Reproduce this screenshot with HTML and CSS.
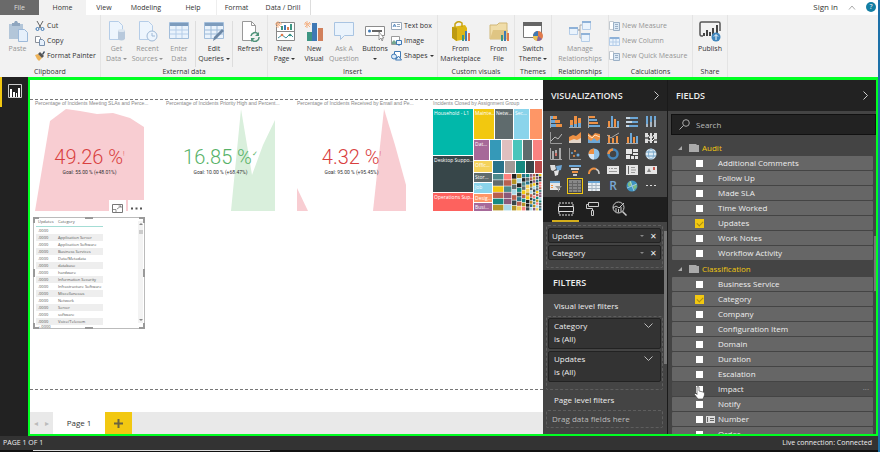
FILE: index.html
```html
<!DOCTYPE html>
<html lang="en">
<head>
    <meta charset="UTF-8">
    <meta name="viewport" content="width=device-width, initial-scale=1.0">
    <title>Report</title>
    <link rel="stylesheet" href="styles.css">
</head>
<body>
    <nav class="tabs">
        <button class="tab tab-file">File</button>
        <button class="tab tab-home">Home</button>
        <button class="tab tab-view">View</button>
        <button class="tab tab-modeling">Modeling</button>
        <button class="tab tab-help">Help</button>
        <button class="tab tab-format">Format</button>
        <button class="tab tab-drill">Data / Drill</button>
        <a class="sign-in" href="#">Sign in</a>
        <button class="collapse" aria-label="Collapse ribbon"><svg width="8" height="5" viewBox="0 0 8 5"><path d="M1 4.500L4 1l3 3.500" fill="none" stroke="#aaa"/></svg></button>
        <button class="help" aria-label="Help">?</button>
    </nav>

    <header class="ribbon">
        <section class="group clipboard">
            <div class="tools">
                <button class="big off">
                    <svg width="20" height="21" viewBox="0 0 20 21"><path d="M1 3h14v15H1z" fill="#b3c6d9"/><path d="M4 5V2h2l1-2h2l1 2h2v3z" fill="#8fa6bf"/><path d="M10.500 8.500h6l3 3v9h-9z" fill="#e6f0fb" stroke="#9db9d9"/></svg>
                    <span>Paste</span>
                </button>
                <div class="list">
                    <button><svg width="10" height="10" viewBox="0 0 10 10"><path d="M2 0l4 7M8 0L4 7" stroke="#666" fill="none"/><circle cx="2.500" cy="8" r="1.500" fill="none" stroke="#3f79b5"/><circle cx="7.500" cy="8" r="1.500" fill="none" stroke="#3f79b5"/></svg>Cut</button>
                    <button><svg width="10" height="10" viewBox="0 0 10 10"><path d="M.5.500h4l1 1v5h-5z" fill="#fff" stroke="#8a9099"/><path d="M4.500 3.500h3l2 2v4h-5z" fill="#e6f0fb" stroke="#7890ad"/></svg>Copy</button>
                    <button><svg width="10" height="10" viewBox="0 0 10 10"><path d="M0 4l3-1 4 4-3 3-2-2z" fill="#edb35a"/><path d="M3 3l2-2 4 4-2 2z" fill="#555"/><path d="M7 3l2-3 1 1-2 3z" fill="#3b4a5c"/></svg>Format Painter</button>
                </div>
            </div>
            <h2>Clipboard</h2>
        </section>

        <section class="group external">
            <div class="tools">
                <button class="big off">
                    <svg width="20" height="21" viewBox="0 0 20 21"><path d="M2.500.500h9l4 4v14h-13z" fill="#edf5fd" stroke="#b5cde8"/><path d="M11 9h7v9q-3.500 3-7 0z" fill="#b8c9dc"/><ellipse cx="14.500" cy="9.500" rx="3.500" ry="1.500" fill="#dce6f0"/></svg>
                    <span>Get<br>Data <i class="arrow"></i></span>
                </button>
                <button class="big off">
                    <svg width="20" height="21" viewBox="0 0 20 21"><path d="M1.500.500h9l4 4v14h-13z" fill="#edf5fd" stroke="#b5cde8"/><circle cx="14" cy="15" r="5" fill="#edf5fd" stroke="#9fb9d6"/><path d="M14 12v3h3" fill="none" stroke="#9fb9d6"/></svg>
                    <span>Recent<br>Sources <i class="arrow"></i></span>
                </button>
                <button class="big off">
                    <svg width="20" height="21" viewBox="0 0 20 21"><path d="M.5 1.500h19v16H.5z" fill="#eaf3fc" stroke="#a3bedb"/><path d="M1 2h18v3H1z" fill="#7d9cbd"/><path d="M1 9h18M1 13h18M7 5v12M13 5v12" stroke="#b5cde8"/></svg>
                    <span>Enter<br>Data</span>
                </button>
                <button class="big framed">
                    <svg width="20" height="21" viewBox="0 0 20 21"><path d="M.5 1.500h19v16H.5z" fill="#eaf3fc" stroke="#a3bedb"/><path d="M1 2h18v3H1z" fill="#7d9cbd"/><path d="M1 9h18M1 13h18M7 5v12M13 5v12" stroke="#9dbad8"/><path d="M9 20l1-4 8-8 2 2-8 8z" fill="#6c87a5"/></svg>
                    <span>Edit<br>Queries <i class="arrow"></i></span>
                </button>
                <button class="big">
                    <svg width="20" height="21" viewBox="0 0 20 21"><path d="M2.500.500h9l4 4v15h-13z" fill="#fff" stroke="#999"/><path d="M11.500.500v4h4" fill="none" stroke="#999"/><circle cx="15" cy="16" r="5" fill="#f2f2f2"/><path d="M11 15a4 4 0 0 1 7-2M19 16a4 4 0 0 1-7 3" fill="none" stroke="#4f937a" stroke-width="1.500"/><path d="M19 11v4h-4zM11 21v-4h4z" fill="#4f937a"/></svg>
                    <span>Refresh</span>
                </button>
            </div>
            <h2>External data</h2>
        </section>

        <section class="group insert">
            <div class="tools">
                <button class="big">
                    <svg width="20" height="21" viewBox="0 0 20 21"><path d="M1.500 1.500h18v18h-18z" fill="#fff" stroke="#888"/><path d="M1 10.500h18" stroke="#888"/><path d="M6 5h2v4H6zM15 3h2v6h-2z" fill="#3e9683"/><path d="M9 4h2v5H9z" fill="#3f79b5"/><path d="M12 6h2v3h-2z" fill="#e07a4b"/><path d="M3 17l4-3 4 3 4-4 3 3" fill="none" stroke="#3e8c9c"/><circle cx="7" cy="14" r="1.300" fill="#e07a4b"/><circle cx="15" cy="14" r="1.300" fill="#3e9683"/><path d="M3 0v7M0 3h7M1 1l5 5M6 1L1 6" stroke="#f4b183"/></svg>
                    <span>New<br>Page <i class="arrow"></i></span>
                </button>
                <button class="big">
                    <svg width="20" height="21" viewBox="0 0 20 21"><path d="M3 11h5v9H3z" fill="#3e9683"/><path d="M8 2h5v18H8z" fill="#3f79b5"/><path d="M14 7h5v13h-5z" fill="#d1805c"/><path d="M3 0v7M0 3h7M1 1l5 5M6 1L1 6" stroke="#f4b183"/></svg>
                    <span>New<br>Visual</span>
                </button>
                <button class="big off">
                    <svg width="20" height="21" viewBox="0 0 20 21"><path d="M.5 1.500h19v13h-9l-4 4v-4h-6z" fill="#eaf3fc" stroke="#a9c4e2"/></svg>
                    <span>Ask A<br>Question</span>
                </button>
                <button class="big">
                    <svg width="20" height="21" viewBox="0 0 20 21"><path d="M.5 5.500h19v9H.5z" fill="#fff" stroke="#8c8c8c"/><circle cx="4.500" cy="10" r="1.500" fill="#3f79b5"/><path d="M7 10h10" stroke="#666" stroke-width="2"/><path d="M14 11v8l2-2 1 3 1-1-1-2h2z" fill="#fff" stroke="#777" stroke-width=".7"/></svg>
                    <span>Buttons<br><i class="arrow"></i></span>
                </button>
                <div class="list">
                    <button><svg width="11" height="10" viewBox="0 0 11 10"><path d="M.5 1.500h10v7H.5z" fill="#fff" stroke="#98a8ba"/><path d="M2 6l1.500-3L5 6M2.500 5h2" fill="none" stroke="#3f79b5" stroke-width=".8"/><path d="M6 3.500h3M6 5.500h3" stroke="#9ab"/></svg>Text box</button>
                    <button><svg width="11" height="10" viewBox="0 0 11 10"><path d="M.5.500h8v8h-8z" fill="#fff" stroke="#9b9b9b"/><path d="M1 8V6l2-2 2 2v2z" fill="#74a78f"/><path d="M5.500 4.500h5v4h-5z" fill="#eaf3fc" stroke="#3f79b5"/><path d="M7 10h2" stroke="#3f79b5"/></svg>Image</button>
                    <button><svg width="11" height="10" viewBox="0 0 11 10"><path d="M3.500.500h6v6h-6z" fill="#fff" stroke="#3f79b5"/><circle cx="3" cy="5.500" r="2.500" fill="#dcebf9" stroke="#3f79b5"/><path d="M7.500 5l3 4h-6z" fill="#eaf3fc" stroke="#3f79b5"/></svg>Shapes <i class="arrow"></i></button>
                </div>
            </div>
            <h2>Insert</h2>
        </section>

        <section class="group custom">
            <div class="tools">
                <button class="big">
                    <svg width="20" height="21" viewBox="0 0 20 21"><path d="M1 6l13-2 2 3v11l-11 2-4-4z" fill="#deb717"/><path d="M1 6l5 1v13l-5-3z" fill="#bd9b12"/><path d="M4 7V3q3-4 7-1v4" fill="none" stroke="#c7a313" stroke-width="1.500"/><path d="M11 14h2v6h-2z" fill="#3e9683"/><path d="M14 10h2v10h-2z" fill="#3f79b5"/><path d="M17 12h2v8h-2z" fill="#e07a4b"/></svg>
                    <span>From<br>Marketplace</span>
                </button>
                <button class="big">
                    <svg width="20" height="21" viewBox="0 0 20 21"><path d="M1 4h7l2-2h8v16H1z" fill="#f0dda9" stroke="#d1b878"/><path d="M1 18l3-9h15l-2 9z" fill="#dfc583"/><path d="M12 14h2v6h-2z" fill="#3e9683"/><path d="M15 10h2v10h-2z" fill="#3f79b5"/><path d="M18 12h2v8h-2z" fill="#e07a4b"/></svg>
                    <span>From<br>File</span>
                </button>
            </div>
            <h2>Custom visuals</h2>
        </section>

        <section class="group themes">
            <div class="tools">
                <button class="big">
                    <svg width="20" height="21" viewBox="0 0 20 21"><path d="M.5 1.500h18v15H.5z" fill="#fff" stroke="#777"/><path d="M0 1h19v4H0z" fill="#666"/><circle cx="15" cy="15" r="5" fill="#e07a4b"/><path d="M15 15V10a5 5 0 0 0-5 5z" fill="#3f79b5"/><path d="M15 15h-5a5 5 0 0 0 4 5z" fill="#e8c455"/><path d="M15 15l4 3a5 5 0 0 1-5 2z" fill="#84659e"/></svg>
                    <span>Switch<br>Theme <i class="arrow"></i></span>
                </button>
            </div>
            <h2>Themes</h2>
        </section>

        <section class="group relations">
            <div class="tools">
                <button class="big off">
                    <svg width="22" height="21" viewBox="0 0 22 21"><path d="M8 9h3V4h3M8 9h3v8h3" fill="none" stroke="#aaa"/><path d="M.5 6.500h8v7h-8zM13.500.500h8v8h-8zM12.500 12.500h8v8h-8z" fill="#eaf3fc" stroke="#b5cde8"/><path d="M0 6h9v2H0zM13 0h9v2h-9zM12 12h9v2h-9z" fill="#8fb2d8"/></svg>
                    <span>Manage<br>Relationships</span>
                </button>
            </div>
            <h2>Relationships</h2>
        </section>

        <section class="group calculations">
            <div class="tools">
                <div class="list off">
                    <button><svg width="11" height="10" viewBox="0 0 11 10"><path d="M.5.500h4v8h-4z" fill="#fff" stroke="#c2c9d0"/><path d="M4.500 1.500h6v8h-6z" fill="#dce9f5" stroke="#9bb0c6"/><path d="M6 3.500h3M6 5.500h3M6 7.500h3" stroke="#9bb0c6"/></svg>New Measure</button>
                    <button><svg width="11" height="10" viewBox="0 0 11 10"><path d="M.5 1.500h10v8H.5z" fill="#eaf3fc" stroke="#b5cde8"/><path d="M1 1h9v2H1z" fill="#8fb2d8"/><path d="M1 6h9M4 3v6M7 3v6" stroke="#b5cde8"/></svg>New Column</button>
                    <button><svg width="11" height="10" viewBox="0 0 11 10"><path d="M.5.500h4v8h-4z" fill="#fff" stroke="#c2c9d0"/><path d="M4.500 2.500h6v7h-6z" fill="#dce9f5" stroke="#9bb0c6"/><path d="M6 4.500h3M6 6.500h3" stroke="#9bb0c6"/></svg>New Quick Measure</button>
                </div>
            </div>
            <h2>Calculations</h2>
        </section>

        <section class="group share">
            <div class="tools">
                <button class="big">
                    <svg width="22" height="21" viewBox="0 0 22 21"><path d="M4 15H2.500Q1 15 1 13V2.500Q1 1 2.500 1h17Q21 1 21 2.500V10" fill="none" stroke="#555" stroke-width="1.500"/><path d="M4 12h2v3H4zM7 9h2v6H7zM10 11h2v4h-2zM13 7h2v8h-2zM17 4h2v8h-2z" fill="#444"/><circle cx="17" cy="16" r="4.500" fill="#3f86bd"/><path d="M17 19v-5M15 15.500l2-2 2 2" fill="none" stroke="#fff"/></svg>
                    <span>Publish</span>
                </button>
            </div>
            <h2>Share</h2>
        </section>
    </header>

    <main class="workspace">
        <aside class="rail">
            <button class="report-view" aria-label="Report">
                <svg width="14" height="14" viewBox="0 0 14 14"><path d="M.5.500h13v13H.5z" fill="none" stroke="#ccc"/><path d="M2 5h2v8H2zM5 8h2v5H5zM8 9h1v4H8zM10 4h2v9h-2z" fill="#fff"/></svg>
            </button>
        </aside>

        <div class="editor">
            <section class="canvas">
                <div class="page">
                    <div class="visuals">
                        <article class="kpi bad">
                            <h3>Percentage of Incidents Meeting SLAs and Perce...</h3>
                            <div class="chart">
                                <svg viewBox="0 0 109 102" preserveAspectRatio="none"><polygon points="0,102 15,12 31,0 45,2 62,5 78,4 95,9 109,18 109,102"/></svg>
                                <div class="value"><strong>49.26 %<sup>!</sup></strong><small>Goal: 55.00 % (+48.01%)</small></div>
                            </div>
                        </article>
                        <article class="kpi good">
                            <h3>Percentage of Incidents Priority High and Percent...</h3>
                            <div class="chart">
                                <svg viewBox="0 0 109 102" preserveAspectRatio="none"><polygon points="65,102 75,0 86,66 97,36 109,11 109,102"/></svg>
                                <div class="value"><strong>16.85 %<sup>✓</sup></strong><small>Goal: 10.00 % (+68.47%)</small></div>
                            </div>
                        </article>
                        <article class="kpi bad">
                            <h3>Percentage of Incidents Received by Email and Pe...</h3>
                            <div class="chart">
                                <svg viewBox="0 0 109 102" preserveAspectRatio="none"><polygon points="0,79 11,102 0,102"/><polygon points="76,102 87,0 98,36 109,76 109,102"/></svg>
                                <div class="value"><strong>4.32 %<sup>!</sup></strong><small>Goal: 95.00 % (+95.45%)</small></div>
                            </div>
                        </article>
                        <article class="tree">
                            <h3>Incidents Closed by Assignment Group</h3>
                            <div class="treemap">
                                <div class="tree-main">
                                    <div class="teal">Household - L1</div>
                                    <div class="slate">Desktop Suppo...</div>
                                    <div class="coral">Operations Sup...</div>
                                </div>
                                <div class="tree-rest">
                                    <div class="tree-top">
                                        <div class="yellow">Mainte...</div>
                                        <div class="gray">Netw...</div>
                                        <div class="sky">Sec...</div>
                                        <div class="orange"></div>
                                    </div>
                                    <div class="tree-second">
                                        <div class="purple">Dat...</div>
                                        <div class="blue"></div>
                                        <div class="rose"></div>
                                        <div class="mint"></div>
                                        <div class="gray"></div>
                                        <div class="salmon"></div>
                                    </div>
                                    <div class="tree-third">
                                        <div class="tree-labels">
                                            <div class="lemon">Offic...</div>
                                            <div class="gray">Stor...</div>
                                            <div class="sky">Job</div>
                                            <div class="orange">Desig...</div>
                                            <div class="purple">Busi...</div>
                                        </div>
                                        <div class="tree-tail">
                                            <div class="tree-five">
                                                <div class="navy"></div>
                                                <div class="stone"></div>
                                                <div class="green"></div>
                                                <div class="slate"></div>
                                                <div class="red"></div>
                                            </div>
                                            <svg class="tree-small" id="tree-small" viewBox="0 0 49 38" preserveAspectRatio="none"></svg>
                                        </div>
                                    </div>
                                </div>
                            </div>
                        </article>
                    </div>

                    <div class="table-visual">
                        <div class="visual-tools">
                            <button aria-label="Focus mode"><svg width="11" height="9" viewBox="0 0 11 9"><path d="M.5.500h10v8H.5z" fill="none" stroke="#777"/><path d="M1 5.500h3v3M5 5l4-3M6.500 2H9v2" fill="none" stroke="#777" stroke-width=".8"/></svg></button>
                            <button aria-label="More options"><svg width="11" height="3" viewBox="0 0 11 3"><path d="M0 .5h2v2H0zM4.500.500h2v2h-2zM9 .5h2v2H9z" fill="#555"/></svg></button>
                        </div>
                        <table>
                            <thead><tr><th>Updates</th><th>Category</th></tr></thead>
                            <tbody>
                                <tr><td>.0000</td><td></td></tr>
                                <tr><td>.0000</td><td>Application Server</td></tr>
                                <tr><td>.0000</td><td>Application Software</td></tr>
                                <tr><td>.0000</td><td>Business Services</td></tr>
                                <tr><td>.0000</td><td>Data/Metadata</td></tr>
                                <tr><td>.0000</td><td>database</td></tr>
                                <tr><td>.0000</td><td>hardware</td></tr>
                                <tr><td>.0000</td><td>Information Security</td></tr>
                                <tr><td>.0000</td><td>Infrastructure Software</td></tr>
                                <tr><td>.0000</td><td>Miscellaneous</td></tr>
                                <tr><td>.0000</td><td>Network</td></tr>
                                <tr><td>.0000</td><td>Server</td></tr>
                                <tr><td>.0000</td><td>software</td></tr>
                                <tr><td>.0000</td><td>Voice/Telecom</td></tr>
                            </tbody>
                            <tfoot><tr><td>+.0000</td><td></td></tr></tfoot>
                        </table>
                        <div class="table-scroll"><i class="up"></i><b></b><i class="down"></i></div>
                        <span class="handle nw"></span><span class="handle n"></span><span class="handle ne"></span>
                        <span class="handle w"></span><span class="handle e"></span>
                        <span class="handle sw"></span><span class="handle s"></span><span class="handle se"></span>
                    </div>
                </div>

                <footer class="page-tabs">
                    <div class="page-nav"><button aria-label="Previous page">◂</button><button aria-label="Next page">▸</button></div>
                    <button class="page-tab">Page 1</button>
                    <button class="add-page" aria-label="New page"><svg width="9" height="9" viewBox="0 0 9 9"><path d="M4.500 0v9M0 4.500h9" stroke="#6b6440" stroke-width="2"/></svg></button>
                </footer>
            </section>

            <aside class="viz">
                <h2 class="pane-title">VISUALIZATIONS <svg width="5" height="9" viewBox="0 0 5 9"><path d="M.5.500l4 4-4 4" fill="none" stroke="#ccc"/></svg></h2>
                <div class="gallery">
                    <button aria-label="Stacked bar chart"><svg viewBox="0 0 12 12"><path d="M.5 0v12" stroke="#aaa"/><path d="M1 0h5v3H1zM1 4h7v3H1zM1 8h8v3H1z" fill="#6da7d6"/><path d="M3 0h4v3H3zM5 4h5v3H5zM6 8h6v3H6z" fill="#ee9144"/></svg></button>
                    <button aria-label="Stacked column chart"><svg viewBox="0 0 12 12"><path d="M0 11.500h12" stroke="#aaa"/><path d="M1 4h3v7H1zM5 0h3v11H5zM9 2h3v9H9z" fill="#ee9144"/><path d="M1 9h3v2H1zM5 8h3v3H5zM9 7h3v4H9z" fill="#6da7d6"/></svg></button>
                    <button aria-label="Clustered bar chart"><svg viewBox="0 0 12 12"><path d="M.5 0v12" stroke="#aaa"/><path d="M1 0h6v2H1zM1 6h9v2H1z" fill="#ee9144"/><path d="M1 3h8v2H1zM1 9h11v2H1z" fill="#6da7d6"/></svg></button>
                    <button aria-label="Clustered column chart"><svg viewBox="0 0 12 12"><path d="M0 11.500h12" stroke="#aaa"/><path d="M1 5h2v6H1zM7 3h2v8H7z" fill="#ee9144"/><path d="M4 0h2v11H4zM10 5h2v6h-2z" fill="#6da7d6"/></svg></button>
                    <button aria-label="100% stacked bar chart"><svg viewBox="0 0 12 12"><path d="M0 1h12v2H0zM0 5h12v2H0zM0 9h12v2H0z" fill="#6da7d6"/><path d="M0 1h4v2H0zM0 5h6v2H0zM0 9h3v2H0z" fill="#c5d5e2"/></svg></button>
                    <button aria-label="100% stacked column chart"><svg viewBox="0 0 12 12"><path d="M1 0h2v11H1zM5 0h2v11H5zM9 0h2v11H9z" fill="#6da7d6"/><path d="M1 8h2v3H1zM5 6h2v5H5zM9 4h2v7H9z" fill="#a9b6c2"/></svg></button>

                    <button aria-label="Line chart"><svg viewBox="0 0 12 12"><path d="M.5 0v11.500H12" fill="none" stroke="#999"/><path d="M1 9l4-4 3 2 4-5" fill="none" stroke="#bbb"/></svg></button>
                    <button aria-label="Area chart"><svg viewBox="0 0 12 12"><path d="M0 11V5l4-2 3 1 5-4v11z" fill="#ee9144"/><path d="M0 11V9l5-2 3 1 4-2v5z" fill="#e3d5c8"/></svg></button>
                    <button aria-label="Stacked area chart"><svg viewBox="0 0 12 12"><path d="M0 11V1l4 3 3-3 5 1v9z" fill="#ee9144"/><path d="M0 11V7l3 2 3-3 3 3 3-2v4z" fill="#6da7d6"/><path d="M0 3l4 3 3-3 5 2" stroke="#ffe0b8" fill="none"/></svg></button>
                    <button aria-label="Line and stacked column chart"><svg viewBox="0 0 12 12"><path d="M1 3h2v8H1zM5 6h2v5H5zM9 4h2v7H9z" fill="#ee9144"/><path d="M0 3l4 3 3-2 5-3" fill="none" stroke="#aaa"/><path d="M0 11.500h12" stroke="#aaa"/></svg></button>
                    <button aria-label="Line and clustered column chart"><svg viewBox="0 0 12 12"><path d="M1 5h2v6H1zM7 5h2v6H7z" fill="#ee9144"/><path d="M4 1h2v10H4zM10 4h2v7h-2z" fill="#6da7d6"/><path d="M0 11.500h12" stroke="#aaa"/></svg></button>
                    <button aria-label="Ribbon chart"><svg viewBox="0 0 12 12"><path d="M0 1h3v10H0zM5 1h2v10H5zM9 1h3v10H9z" fill="#ddd"/><path d="M3 3l2 3M7 6l2-3M3 8l2 1M7 9l2-2" stroke="#fff"/><path d="M0 5h3v2H0zM9 7h3v2H9z" fill="#777"/></svg></button>

                    <button aria-label="Waterfall chart"><svg viewBox="0 0 12 12"><path d="M.5 0v11.500H12" fill="none" stroke="#aaa"/><path d="M2 3h2v8H2zM5 2h2v5H5zM9 0h2v11H9z" fill="#a9a9a9"/><path d="M5 5h2v3H5z" fill="#ca6d65"/></svg></button>
                    <button aria-label="Scatter chart"><svg viewBox="0 0 12 12"><path d="M.5 0v11.500H12" fill="none" stroke="#999"/><circle cx="3" cy="5" r="1" fill="#6da7d6"/><circle cx="6" cy="3" r="1" fill="#ee9144"/><circle cx="9" cy="7" r="1.500" fill="#6da7d6"/><circle cx="5" cy="8" r="1" fill="#ee9144"/></svg></button>
                    <button aria-label="Pie chart"><svg viewBox="0 0 12 12"><circle cx="6" cy="6" r="5.500" fill="#8fc1e8"/><path d="M6 6V.5A5.500 5.500 0 0 0 .5 6z" fill="#ee9144"/><path d="M6 6H.5A5.500 5.500 0 0 0 6 11.500z" fill="#dbe9f5"/></svg></button>
                    <button aria-label="Donut chart"><svg viewBox="0 0 12 12"><circle cx="6" cy="6" r="4.500" fill="none" stroke="#4787bb" stroke-width="2.500"/><path d="M6 1.500A4.500 4.500 0 0 0 1.500 6" fill="none" stroke="#ee9144" stroke-width="2.500"/></svg></button>
                    <button aria-label="Treemap"><svg viewBox="0 0 12 12"><path d="M0 1h6v5H0zM7 1h5v3H7zM7 5h5v2H7zM0 7h4v4H0zM5 8h3v3H5zM9 8h3v3H9z" fill="#e5e5e5"/></svg></button>
                    <button aria-label="Map"><svg viewBox="0 0 12 12"><circle cx="6" cy="6" r="5.500" fill="#dcebf5"/><path d="M1 4h10M1 8h10" stroke="#6d9fc4"/><ellipse cx="6" cy="6" rx="2.500" ry="5" fill="none" stroke="#6d9fc4" stroke-width=".7"/></svg></button>

                    <button aria-label="Filled map"><svg viewBox="0 0 12 12"><path d="M0 1h5l1 4-3 2-2-1z" fill="#ddd"/><path d="M6 2l6-1-1 5-4 1z" fill="#6da7d6"/><path d="M4 7l5-1-1 5-3 1z" fill="#e5e5e5"/></svg></button>
                    <button aria-label="Funnel"><svg viewBox="0 0 12 12"><path d="M0 1h12v2H0z" fill="#6da7d6"/><path d="M2 4h8v2H2z" fill="#ddd"/><path d="M3 7h6v2H3z" fill="#ee9144"/><path d="M4 10h4v2H4z" fill="#ccc"/></svg></button>
                    <button aria-label="Gauge"><svg viewBox="0 0 12 12"><path d="M1 10a5 5 0 0 1 7-5" fill="none" stroke="#ee9144" stroke-width="2"/><path d="M8 5a5 5 0 0 1 3 5" fill="none" stroke="#ccc" stroke-width="1.500"/></svg></button>
                    <button aria-label="Card"><svg viewBox="0 0 12 12"><path d="M0 2h12v8H0z" fill="#e5e5e5"/><path d="M2 4.500h1M4 4.500h2M7 4.500h3M2 7.500h8" stroke="#999"/></svg></button>
                    <button aria-label="Multi-row card"><svg viewBox="0 0 12 12"><path d="M0 1h12v10H0z" fill="#e5e5e5"/><path d="M2.500 2v8" stroke="#666"/><path d="M5 3.500h4M5 6h5M5 8.500h4" stroke="#999"/></svg></button>
                    <button aria-label="KPI"><svg viewBox="0 0 12 12"><path d="M0 2h12v8H0z" fill="#e5e5e5"/><path d="M2 8l2-4 2 4z" fill="#888"/><path d="M8 3h2v3H8z" fill="#ca5a50"/></svg></button>

                    <button aria-label="Slicer"><svg viewBox="0 0 12 12"><path d="M0 1h10v9H0z" fill="#e5e5e5"/><path d="M0 1h10v2H0z" fill="#6da7d6"/><path d="M1 5h2v1H1zM1 7h2v1H1z" fill="#ee9144"/><path d="M5 6h7l-3 3v3L8 11V9z" fill="#999"/></svg></button>
                    <button class="selected" aria-label="Table"><svg viewBox="0 0 12 12"><path d="M0 0h12v12H0z" fill="#888"/><path d="M0 3.500h12M0 6.500h12M0 9.500h12M3.500 1v11M8.500 1v11" stroke="#666"/></svg></button>
                    <button aria-label="Matrix"><svg viewBox="0 0 12 12"><path d="M0 1h12v10H0z" fill="#e8eef3"/><path d="M0 1h12v2H0z" fill="#6da7d6"/><path d="M0 5.500h12M0 8.500h12M4 3v8M8 3v8" stroke="#a6b5c2"/></svg></button>
                    <button class="r-visual" aria-label="R script visual">R</button>
                    <button aria-label="ArcGIS map"><svg viewBox="0 0 12 12"><circle cx="6" cy="6" r="5.500" fill="#3f93c2"/><path d="M2 3l3-2 1 3-2 3-2-1zM7 6l3-2 1 3-3 3z" fill="#7cbd83"/><path d="M1 8l10-4M4 1l4 10" stroke="#d5e9f5" stroke-width=".6"/></svg></button>
                    <button aria-label="Import visual"><svg viewBox="0 0 12 12"><path d="M1 5h2v1H1zM5 5h2v1H5zM9 5h2v1H9z" fill="#ddd"/></svg></button>
                </div>
                <div class="viz-tabs">
                    <button class="active" aria-label="Fields"><svg width="16" height="14" viewBox="0 0 16 14"><path d="M1 4V1h14v3M1 10v3h14v-3" fill="none" stroke="#ddd" stroke-dasharray="2 1"/><path d="M.5 4.500h15v5H.5z" fill="none" stroke="#ddd"/></svg></button>
                    <button aria-label="Format"><svg width="14" height="15" viewBox="0 0 14 15"><path d="M2.500 1.500h10v4h-10zM2.500 3.500h-2v4h6v2" fill="none" stroke="#ccc"/><path d="M5.500 9.500h2v5h-2z" fill="none" stroke="#ccc"/></svg></button>
                    <button aria-label="Analytics"><svg width="15" height="15" viewBox="0 0 15 15"><circle cx="6.500" cy="6.500" r="5.500" fill="none" stroke="#ccc"/><path d="M10.500 10.500l4 4" stroke="#ccc" stroke-width="1.500"/><path d="M1 7l3-2 3 2 5-5M4 7v4M6.500 8v3.500M9 6v5" fill="none" stroke="#ccc"/></svg></button>
                </div>
                <div class="viz-body">
                    <div class="well">
                        <div class="pill">Updates <i class="arrow"></i><button aria-label="Remove Updates">✕</button></div>
                        <div class="pill">Category <i class="arrow"></i><button aria-label="Remove Category">✕</button></div>
                    </div>
                    <h2 class="filters-title">FILTERS</h2>
                    <h3>Visual level filters</h3>
                    <div class="filter-list">
                        <button class="filter"><span>Category<br>is (All)</span><svg width="9" height="5" viewBox="0 0 9 5"><path d="M.5.500l4 4 4-4" fill="none" stroke="#bbb"/></svg></button>
                        <button class="filter"><span>Updates<br>is (All)</span><svg width="9" height="5" viewBox="0 0 9 5"><path d="M.5.500l4 4 4-4" fill="none" stroke="#bbb"/></svg></button>
                    </div>
                    <h3>Page level filters</h3>
                    <div class="drop">Drag data fields here</div>
                    <span class="scroll-thumb"></span>
                </div>
            </aside>

            <aside class="fields">
                <h2 class="pane-title">FIELDS <svg width="5" height="9" viewBox="0 0 5 9"><path d="M.5.500l4 4-4 4" fill="none" stroke="#ccc"/></svg></h2>
                <label class="search">
                    <svg width="11" height="11" viewBox="0 0 11 11"><circle cx="7" cy="4" r="3.300" fill="none" stroke="#aaa"/><path d="M4.500 6.500L.5 10.500" stroke="#aaa"/></svg>
                    <input type="text" placeholder="Search" aria-label="Search">
                </label>
                <div class="field-tree">
                    <button class="folder"><i></i><svg width="10" height="8" viewBox="0 0 10 8"><path d="M0 0h7l1 1h2v7H0z" fill="#aaa"/></svg>Audit</button>
                    <label class="field"><input type="checkbox">Additional Comments</label>
                    <label class="field"><input type="checkbox">Follow Up</label>
                    <label class="field"><input type="checkbox">Made SLA</label>
                    <label class="field"><input type="checkbox">Time Worked</label>
                    <label class="field"><input type="checkbox" checked>Updates</label>
                    <label class="field"><input type="checkbox">Work Notes</label>
                    <label class="field"><input type="checkbox">Workflow Activity</label>
                    <button class="folder"><i></i><svg width="10" height="8" viewBox="0 0 10 8"><path d="M0 0h7l1 1h2v7H0z" fill="#aaa"/></svg>Classification</button>
                    <label class="field"><input type="checkbox">Business Service</label>
                    <label class="field"><input type="checkbox" checked>Category</label>
                    <label class="field"><input type="checkbox">Company</label>
                    <label class="field"><input type="checkbox">Configuration Item</label>
                    <label class="field"><input type="checkbox">Domain</label>
                    <label class="field"><input type="checkbox">Duration</label>
                    <label class="field"><input type="checkbox">Escalation</label>
                    <label class="field hovered"><input type="checkbox">Impact<span class="more">···</span>
                        <svg class="pointer" width="11" height="14" viewBox="0 0 11 14"><path d="M3 1q1-1 2 0v4l4 1q2 0 1.500 3L9 13H4L.5 8.500q0-1.500 1.500-1l1 1z" fill="#fff" stroke="#333" stroke-width=".6"/></svg>
                    </label>
                    <label class="field"><input type="checkbox">Notify</label>
                    <label class="field has-key"><input type="checkbox"><svg width="9" height="7" viewBox="0 0 9 7"><path d="M0 0h9v7H0z" fill="#ddd"/><path d="M1.500 1v5M4 2.500h4M4 4.500h4" stroke="#666"/></svg>Number</label>
                    <label class="field"><input type="checkbox">Order</label>
                    <span class="scroll-thumb"></span>
                </div>
            </aside>
        </div>
    </main>

    <footer class="status"><span>PAGE 1 OF 1</span><span>Live connection: Connected</span></footer>
    <div class="edge"><span></span></div>

    <script>
        // Smallest groups of the treemap: each column is cut into thinner blocks
        const colors = ['#4c8a8c', '#374649', '#b59525', '#5f6b6d', '#8a5a7a', '#fd817e', '#f2c80f', '#28738a', '#a9d8e8', '#b8604f', '#222', '#f4d25a', '#168980'];
        const columns = [[0, 11, 6], [11, 8, 6], [19, 5, 7], [24, 5, 8], [29, 4, 9], [33, 4, 10], [37, 3, 11], [40, 3, 12], [43, 3, 13], [46, 3, 14]];
        let rects = '';

        columns.forEach(([x, width, count], col) => {
            const height = 38 / count;
            for (let row = 0; row < count; row++) {
                const color = colors[(col * 5 + row * 3 + (col * row) % 4) % colors.length];
                rects += `<rect x="${x}" y="${row * height}" width="${width - 0.6}" height="${height - 0.6}" fill="${color}"/>`;
            }
        });
        document.getElementById('tree-small').innerHTML = rects;
    </script>
</body>
</html>
```
FILE: styles.css
```css
* {
    box-sizing: border-box;
}

body {
    margin: 0;
    height: 100vh;
    display: flex;
    flex-direction: column;
    overflow: hidden;
    background-color: #fff;
    border-right: 2px solid #1c70a8;
    color: #333;
    font-family: "Open Sans", "Noto Sans", sans-serif;
    font-size: 7px;
    line-height: 10px;
}

button {
    padding: 0;
    border: none;
    background: none;
    color: inherit;
    font: inherit;
}

h2, h3 {
    margin: 0;
    font: inherit;
}

svg {
    flex: none;
}

.arrow {
    display: inline-block;
    border: 2px solid transparent;
    border-top-color: currentColor;
    border-bottom: none;
    vertical-align: middle;
}

/* Tabs */

.tabs {
    display: flex;
    height: 15px;
    flex: none;
}

.tab-file {
    width: 39px;
    background-color: #6a6a6a;
    color: #ddd;
}

.tab-home {
    width: 47px;
    background-color: #f2f2f2;
}

.tab-view {
    width: 36px;
}

.tab-modeling {
    width: 48px;
}

.tab-help {
    width: 46px;
}

.tab-format {
    width: 40px;
    border-left: 1px solid #eee;
}

.tab-drill {
    width: 55px;
    border-right: 1px solid #ddd;
}

.sign-in {
    margin-left: auto;
    padding-top: 2px;
    color: #333;
    font-size: 8px;
    text-decoration: none;
}

.collapse {
    width: 28px;
}

.help {
    width: 10px;
    height: 10px;
    margin: 2px 2px 0 0;
    border-radius: 50%;
    background-color: #137ea3;
    color: #fff;
    line-height: 8px;
}

/* Ribbon */

.ribbon {
    display: flex;
    flex: none;
    height: 62px;
    background-color: #f2f2f2;
}

.group {
    display: flex;
    flex-direction: column;
    flex: none;
    border-right: 1px solid #e4e4e4;
}

.group h2 {
    text-align: center;
}

.tools {
    display: grid;
    flex: 1;
    padding-top: 6px;
    white-space: nowrap;
}

.tools > * {
    min-width: 0;
}

.big {
    display: flex;
    flex-direction: column;
    align-items: center;
    gap: 2px;
}

.big.framed {
    border: 1px solid #ddd;
    border-width: 0 1px;
}

.off {
    color: #949494;
}

.list {
    display: flex;
    flex-direction: column;
    gap: 5px;
}

.list button {
    display: flex;
    align-items: center;
    gap: 2px;
    height: 10px;
}

.clipboard {
    width: 101px;
}

.clipboard .tools {
    grid-template-columns: 35px 1fr;
}

.external {
    width: 167px;
}

.external .tools {
    grid-template-columns: 31px 31px 32px 38px 1fr;
}

.insert {
    width: 170px;
}

.insert .tools {
    grid-template-columns: 33px 26px 34px 28px 1fr;
}

.insert .list {
    padding-left: 2px;
}

.custom {
    width: 77px;
}

.custom .tools {
    grid-template-columns: 45px 1fr;
}

.themes {
    width: 37px;
}

.relations {
    width: 57px;
}

.calculations {
    width: 84px;
}

.share {
    width: 35px;
}

/* Workspace */

.workspace {
    display: flex;
    flex: 1;
    min-height: 0;
}

.rail {
    width: 28px;
    background-color: #222;
}

.report-view {
    width: 28px;
    height: 30px;
    border-left: 2px solid #f2c811;
}

.editor {
    display: flex;
    flex: 1;
    min-width: 0;
    border: 2px solid #0f2;
    border-top-width: 3px;
}

.canvas {
    display: flex;
    flex-direction: column;
    flex: 1;
    min-width: 0;
}

.page {
    flex: 1;
    min-height: 0;
    margin: 19px 0 22px;
    border: 1px dashed #777;
    border-width: 1px 0;
}

.visuals {
    display: grid;
    grid-template-columns: 109fr 109fr 109fr 114fr;
    gap: 22px;
    padding: 0 1px 0 5px;
}

.visuals h3 {
    height: 9px;
    color: #888;
    font-family: "Liberation Sans", sans-serif;
    font-size: 5px;
    line-height: 7px;
    white-space: nowrap;
}

.visuals article {
    min-width: 0;
}

.chart {
    position: relative;
    height: 102px;
}

.chart svg {
    display: block;
    width: 100%;
    height: 100%;
}

.value {
    position: absolute;
    inset: 35px 0 auto;
    display: flex;
    flex-direction: column;
    align-items: center;
    font-family: "Roboto", sans-serif;
}

.value strong {
    font-size: 20px;
    font-weight: 300;
    line-height: 26px;
    white-space: nowrap;
}

.value sup {
    font-size: 7px;
    line-height: 7px;
}

.value small {
    color: #333;
    font-size: 5px;
    line-height: 5px;
}

.bad {
    color: #d93f3f;
    fill: #f8cdd2;
}

.good {
    color: #57b268;
    fill: #d9efdc;
}

/* Treemap */

.tree {
    padding-left: 5px;
}

.treemap {
    display: grid;
    grid-template-columns: 40fr 68fr;
    gap: 1px;
    height: 102px;
    color: #fff;
    font-size: 5px;
    line-height: 8px;
    white-space: nowrap;
}

.treemap div {
    min-width: 0;
    min-height: 0;
    overflow: hidden;
}

.tree-main > div, .tree-top > div, .tree-second > div, .tree-labels > div {
    padding-left: 1px;
}

.tree-main, .tree-rest, .tree-top, .tree-second, .tree-third, .tree-labels, .tree-tail, .tree-five {
    display: grid;
    gap: 1px;
}

.tree-main {
    grid-template-rows: 46fr 36fr 18fr;
}

.tree-rest {
    grid-template-rows: 30fr 20fr 50fr;
}

.tree-top {
    grid-template-columns: 20fr 18fr 15fr 12fr;
}

.tree-second {
    grid-template-columns: 15fr 11fr 10fr 9fr 9fr 9fr;
}

.tree-third {
    grid-template-columns: 18fr 49fr;
}

.tree-labels {
    grid-template-rows: 11fr 9fr 10fr 8fr 8fr;
}

.tree-tail {
    grid-template-rows: 12fr 37fr;
}

.tree-five {
    grid-template-columns: 11fr 10fr 9fr 8fr 7fr;
}

.tree-small {
    width: 100%;
    height: 100%;
}

.teal { background-color: #01b8aa; }
.slate { background-color: #374649; }
.coral { background-color: #fd625e; }
.yellow { background-color: #f2c80f; }
.gray { background-color: #5f6b6d; }
.sky { background-color: #8ad4eb; }
.orange { background-color: #fe9666; }
.purple { background-color: #a66999; }
.blue { background-color: #3599b8; }
.rose { background-color: #dfbfbf; }
.mint { background-color: #4ac5bb; }
.salmon { background-color: #fb8281; }
.lemon { background-color: #f4d25a; }
.navy { background-color: #28738a; }
.stone { background-color: #a09a96; }
.green { background-color: #168980; }
.red { background-color: #bb4a4a; }

/* Table visual */

.table-visual {
    position: relative;
    width: 112px;
    height: 112px;
    margin: 6px 0 0 3px;
    border: 1px solid #bbb;
    font-size: 4px;
}

.table-visual table {
    display: block;
    height: 110px;
    margin-left: 2px;
    overflow: hidden;
    border-collapse: collapse;
    color: #555;
    line-height: 7px;
    white-space: nowrap;
}

.table-visual th, .table-visual td {
    height: 7px;
    padding: 0 0 0 2px;
    font-weight: normal;
    text-align: left;
}

.table-visual th {
    height: 8px;
    border-bottom: 1px solid #a4ddd5;
}

.table-visual th:first-child {
    width: 20px;
}

.table-visual th:last-child {
    width: 47px;
}

.table-visual tbody tr:nth-child(even) {
    background-color: #eee;
}

.table-visual tfoot td {
    height: 4px;
    line-height: 4px;
}

.visual-tools {
    position: absolute;
    right: -1px;
    bottom: 111px;
    display: flex;
    gap: 2px;
}

.visual-tools button {
    display: grid;
    place-items: center;
    width: 17px;
    height: 17px;
    background-color: #fff;
}

.table-scroll {
    position: absolute;
    inset: 3px 1px 5px auto;
    display: flex;
    flex-direction: column;
    align-items: center;
    width: 5px;
    background-color: #f3f3f3;
}

.table-scroll i {
    border: 2px solid transparent;
}

.table-scroll .up {
    border-bottom-color: #888;
}

.table-scroll .down {
    margin-top: auto;
    border-top-color: #888;
}

.table-scroll b {
    width: 4px;
    height: 4px;
    margin-top: 5px;
    background-color: #ccc;
}

.handle {
    position: absolute;
    width: 6px;
    height: 6px;
    border: 0 solid #999;
}

.nw { top: -1px; left: -1px; border-width: 2px 0 0 2px; }
.ne { top: -1px; right: -1px; border-width: 2px 2px 0 0; }
.sw { bottom: -1px; left: -1px; border-width: 0 0 2px 2px; }
.se { bottom: -1px; right: -1px; border-width: 0 2px 2px 0; }
.n { top: -1px; left: 50%; width: 8px; margin-left: -4px; border-top-width: 2px; }
.s { bottom: -1px; left: 50%; width: 8px; height: 2px; margin-left: -4px; border-top-width: 2px; }
.w { left: -1px; top: 50%; height: 8px; margin-top: -4px; border-left-width: 2px; }
.e { right: -1px; top: 50%; height: 8px; margin-top: -4px; border-right-width: 2px; }

/* Page tabs */

.page-tabs {
    display: flex;
    height: 22px;
    background-color: #e9e9e9;
    font-size: 8px;
}

.page-nav {
    display: flex;
    width: 23px;
    justify-content: space-around;
    color: #bbb;
}

.page-tab {
    width: 52px;
    background-color: #fff;
}

.add-page {
    display: grid;
    place-items: center;
    width: 27px;
    background-color: #f2c811;
}

/* Side panes */

.viz, .fields {
    display: flex;
    flex-direction: column;
    min-height: 0;
    background-color: #444;
    color: #eee;
    font-size: 8px;
}

.viz {
    width: 125px;
    border-right: 1px solid #1a1a1a;
}

.fields {
    width: 208px;
}

.pane-title {
    display: flex;
    flex: none;
    align-items: center;
    justify-content: space-between;
    height: 31px;
    padding: 0 8px;
    background-color: #222;
    font-size: 9px;
    font-weight: 600;
}

.gallery {
    display: grid;
    grid-template-columns: repeat(6, 1fr);
    grid-auto-rows: 16px;
    flex: none;
    padding: 3px 6px 3px 3px;
}

.gallery button {
    display: grid;
    place-items: center;
    width: 16px;
    justify-self: center;
}

.gallery svg {
    width: 12px;
    height: 12px;
}

.gallery .selected {
    outline: 1px solid #f2c811;
    outline-offset: -1px;
}

.gallery .r-visual {
    color: #79a9d4;
    font-size: 12px;
    font-weight: 600;
}

.viz-tabs {
    display: flex;
    flex: none;
    height: 25px;
    padding-left: 9px;
    background-color: #1f1f1f;
}

.viz-tabs button {
    display: grid;
    place-items: center;
    width: 27px;
    border-bottom: 2px solid transparent;
}

.viz-tabs .active {
    border-color: #d4ae1c;
}

.viz-body {
    position: relative;
    flex: 1;
    min-height: 0;
    padding-top: 3px;
    overflow: hidden;
}

.well, .filter-list, .drop {
    margin: 0 4px 0 3px;
    border: 1px dashed #5e5e5e;
    border-radius: 2px;
}

.well {
    display: flex;
    flex-direction: column;
    gap: 2px;
    height: 43px;
    padding: 2px 1px;
}

.pill {
    display: flex;
    align-items: center;
    gap: 6px;
    height: 15px;
    padding: 0 3px;
    border: 1px solid #222;
    border-radius: 2px;
    background-color: #333;
}

.pill .arrow {
    margin-left: auto;
    color: #888;
}

.filters-title {
    height: 24px;
    margin-top: 2px;
    padding-left: 10px;
    background-color: #222;
    font-size: 9px;
    font-weight: 600;
    line-height: 26px;
}

.viz-body h3 {
    padding-left: 11px;
    line-height: 20px;
}

.filters-title + h3 {
    padding-top: 2px;
}

.filter-list {
    display: flex;
    flex-direction: column;
    gap: 2px;
    height: 74px;
    padding: 1px;
}

.filter {
    display: flex;
    align-items: flex-start;
    justify-content: space-between;
    height: 31px;
    padding: 0 7px 0 5px;
    border: 1px solid #222;
    border-radius: 2px;
    background-color: #333;
    line-height: 13px;
    text-align: left;
}

.filter svg {
    margin-top: 4px;
}

.drop {
    height: 18px;
    padding-left: 5px;
    color: #bbb;
    line-height: 16px;
}

.scroll-thumb {
    position: absolute;
    top: 9px;
    right: 0;
    width: 3px;
    height: 133px;
    background-color: #777;
}

.search {
    display: flex;
    flex: none;
    align-items: center;
    gap: 6px;
    height: 21px;
    margin: 3px 0 5px 3px;
    padding-left: 7px;
    border: 1px solid #111;
    background-color: #222;
}

.search input {
    flex: 1;
    min-width: 0;
    padding: 0;
    border: none;
    outline: none;
    background: none;
    color: #ccc;
    font: inherit;
}

.search input::placeholder {
    color: #bbb;
}

.field-tree {
    position: relative;
    flex: 1;
    min-height: 0;
    padding: 0 3px 0 4px;
    overflow: hidden;
}

.folder {
    display: flex;
    align-items: center;
    gap: 3px;
    height: 16px;
    padding-left: 6px;
    color: #f2c811;
}

.folder i {
    width: 0;
    margin-right: 4px;
    border: 2px solid transparent;
    border-right-color: #aaa;
    border-bottom-color: #aaa;
}

.field {
    position: relative;
    display: flex;
    align-items: center;
    gap: 15px;
    height: 14px;
    margin-bottom: 1px;
    padding-left: 24px;
    border-radius: 1px;
    background-color: #666;
}

.field input {
    appearance: none;
    flex: none;
    width: 7px;
    height: 7px;
    margin: 0;
    background-color: #fff;
}

.field input:checked {
    display: grid;
    place-items: center;
    background-color: #f2c811;
    outline: 1px solid #f2c811;
}

.field input:checked::after {
    content: "";
    width: 5px;
    height: 3px;
    border: 1px solid #a98c12;
    border-width: 0 0 1px 1px;
    transform: rotate(-45deg);
}

.field.hovered {
    background-color: #505050;
}

.field.has-key {
    gap: 3px;
}

.more {
    margin-left: auto;
    padding-right: 4px;
    color: #aaa;
}

.pointer {
    position: absolute;
    top: 4px;
    left: 22px;
    z-index: 1;
}

.field-tree .scroll-thumb {
    top: 96px;
    width: 2px;
    height: 55px;
}

/* Status bar */

.status {
    display: flex;
    flex: none;
    align-items: center;
    justify-content: space-between;
    height: 14px;
    padding: 0 6px 0 3px;
    background-color: #333;
    color: #eee;
}

.edge {
    flex: none;
    height: 2px;
    padding-left: 33px;
    background-color: #111;
}

.edge span {
    display: block;
    width: 28%;
    height: 1px;
    background-color: #ddd;
}
```
